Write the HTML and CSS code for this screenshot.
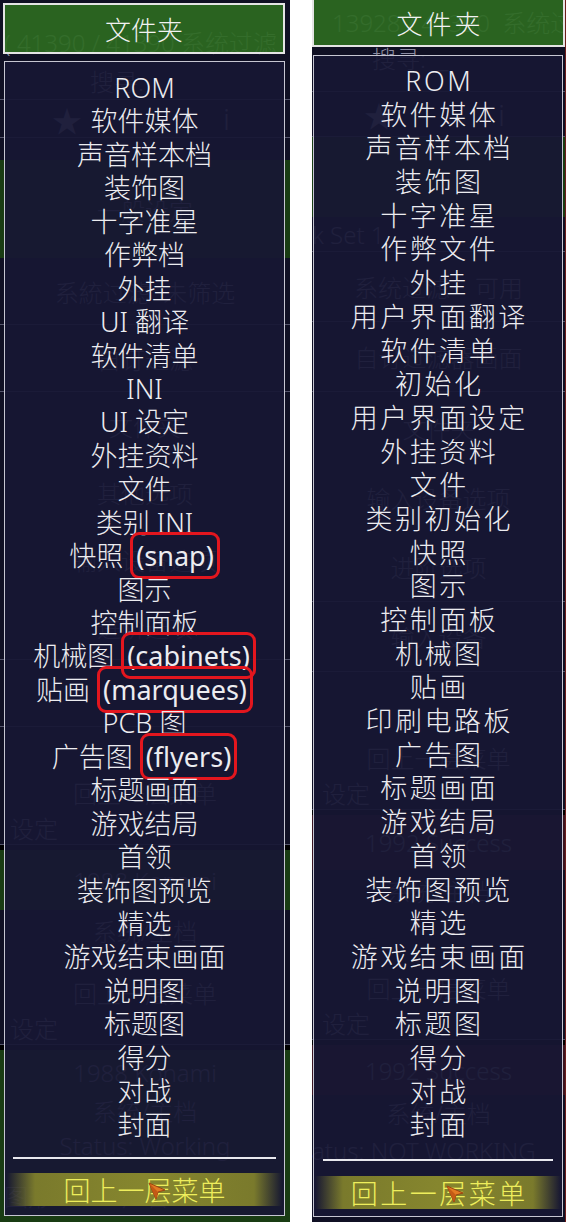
FILE: index.html
```html
<!DOCTYPE html>
<html>
<head>
  <meta charset="UTF-8">
  <title>文件夹</title>
  <link rel="stylesheet" href="styles.css">
</head>
<body>
  <div class="shots">

    <!-- 左图：原始翻译 -->
    <section class="panel panel-a">
      <div class="backdrop">
        <div class="bd h20"></div>
        <div class="bd h42 pad4">( 41390 / 41390 系统过滤</div>
        <div class="bd h38 line pad90">搜寻:&nbsp;&nbsp;_</div>
        <div class="bd h38 line icons"><span>★</span><span>i</span></div>
        <div class="bd h22"></div>
        <div class="bd h98 green center">一般设定</div>
        <div class="bd h67 line center">系統过滤&nbsp;&nbsp;未筛选</div>
        <div class="bd h67 line center">自订过滤</div>
        <div class="bd h67 center">文件夹</div>
        <div class="bd h67 center">其他选项</div>
        <div class="bd h67 center">输入设备选项</div>
        <div class="bd h67 line center">进阶选项</div>
        <div class="bd h67 line"></div>
        <div class="bd h48"></div>
        <div class="bd h35 center">回上一层菜单</div>
        <div class="bd h35 line pad10">设定</div>
        <div class="bd h5 black"></div>
        <div class="bd h60 green center">1988 Konami</div>
        <div class="bd h40 center">系统/主档</div>
        <div class="bd h25"></div>
        <div class="bd h35 center">回上一层菜单</div>
        <div class="bd h35 line pad10">设定</div>
        <div class="bd h5 black"></div>
        <div class="bd h45 green center">1988 Konami</div>
        <div class="bd h30 green center">系統/主档</div>
        <div class="bd h40 green center">Status: Working</div>
        <div class="bd h60 green pad4">图形&nbsp;&nbsp;&nbsp;OK&nbsp;&nbsp;&nbsp;声音&nbsp;&nbsp;&nbsp;OK</div>
      </div>

      <div class="popup">
        <div class="popup-title">文件夹</div>
        <div class="popup-menu">
          <ul class="items">
            <li>ROM</li>
            <li>软件媒体</li>
            <li>声音样本档</li>
            <li>装饰图</li>
            <li>十字准星</li>
            <li>作弊档</li>
            <li>外挂</li>
            <li>UI 翻译</li>
            <li>软件清单</li>
            <li>INI</li>
            <li>UI 设定</li>
            <li>外挂资料</li>
            <li>文件</li>
            <li>类别 INI</li>
            <li>快照 <span class="mark">(snap)</span></li>
            <li>图示</li>
            <li>控制面板</li>
            <li>机械图 <span class="mark">(cabinets)</span></li>
            <li>贴画 <span class="mark">(marquees)</span></li>
            <li>PCB 图</li>
            <li>广告图 <span class="mark">(flyers)</span></li>
            <li>标题画面</li>
            <li>游戏结局</li>
            <li>首领</li>
            <li>装饰图预览</li>
            <li>精选</li>
            <li>游戏结束画面</li>
            <li>说明图</li>
            <li>标题图</li>
            <li>得分</li>
            <li>对战</li>
            <li>封面</li>
          </ul>
          <div class="sep"></div>
          <div class="back">
            回上一层菜单
            <svg class="cursor" width="18" height="18" viewBox="0 0 18 18">
              <polygon points="1,1 17,8 10,10 8,17" fill="#e27a22" stroke="#9c4410" stroke-width="1"/>
              <polygon points="1,1 10,10 8,17" fill="#c45a16"/>
            </svg>
          </div>
        </div>
      </div>
    </section>

    <!-- 右图：修改后 -->
    <section class="panel panel-b">
      <div class="backdrop">
        <div class="bd h42 pad20">13928 / 41390&nbsp;&nbsp;系统过滤</div>
        <div class="bd h30 pad60">搜寻:&nbsp;&nbsp;_</div>
        <div class="bd h20 line"></div>
        <div class="bd h45 line icons"><span>★</span><span>i</span></div>
        <div class="bd h80 green"></div>
        <div class="bd h35 line">k Set 1</div>
        <div class="bd h70 line center">系统过滤&nbsp;&nbsp;&nbsp;&nbsp;可用</div>
        <div class="bd h70 line center">自订过滤器画面</div>
        <div class="bd h70 center">文件夹</div>
        <div class="bd h70 center">输入设备选项</div>
        <div class="bd h70 line center">进阶选项</div>
        <div class="bd h70 line center">输入设备</div>
        <div class="bd h68"></div>
        <div class="bd h35 center">回上一层菜单</div>
        <div class="bd h35 line pad10">设定</div>
        <div class="bd h5 black"></div>
        <div class="bd h55 red center">1992 Success</div>
        <div class="bd h40 center">系统/主档</div>
        <div class="bd h60"></div>
        <div class="bd h35 center">回上一层菜单</div>
        <div class="bd h35 line pad10">设定</div>
        <div class="bd h5 black"></div>
        <div class="bd h50 red center">1992 Success</div>
        <div class="bd h35 center">系统/主档</div>
        <div class="bd h40">atus: NOT WORKING</div>
        <div class="bd h60"></div>
      </div>

      <div class="popup">
        <div class="popup-title">文件夹</div>
        <div class="popup-menu">
          <ul class="items">
            <li>ROM</li>
            <li>软件媒体</li>
            <li>声音样本档</li>
            <li>装饰图</li>
            <li>十字准星</li>
            <li>作弊文件</li>
            <li>外挂</li>
            <li>用户界面翻译</li>
            <li>软件清单</li>
            <li>初始化</li>
            <li>用户界面设定</li>
            <li>外挂资料</li>
            <li>文件</li>
            <li>类别初始化</li>
            <li>快照</li>
            <li>图示</li>
            <li>控制面板</li>
            <li>机械图</li>
            <li>贴画</li>
            <li>印刷电路板</li>
            <li>广告图</li>
            <li>标题画面</li>
            <li>游戏结局</li>
            <li>首领</li>
            <li>装饰图预览</li>
            <li>精选</li>
            <li>游戏结束画面</li>
            <li>说明图</li>
            <li>标题图</li>
            <li>得分</li>
            <li>对战</li>
            <li>封面</li>
          </ul>
          <div class="sep"></div>
          <div class="back">
            回上一层菜单
            <svg class="cursor" width="18" height="18" viewBox="0 0 18 18">
              <polygon points="1,1 17,8 10,10 8,17" fill="#e27a22" stroke="#9c4410" stroke-width="1"/>
              <polygon points="1,1 10,10 8,17" fill="#c45a16"/>
            </svg>
          </div>
        </div>
      </div>
    </section>

  </div>
</body>
</html>
```

FILE: styles.css
```css
body {
  margin: 0;
  background: #fff;
  font-family: "Noto Sans", "Noto Sans CJK SC", sans-serif;
}

.shots {
  display: flex;
  gap: 22px;
  height: 1222px;
}

.panel {
  position: relative;
  height: 1222px;
  overflow: hidden;
  background: #101024;
  box-sizing: border-box;
}

.panel-a {
  width: 290px;
}

.panel-b {
  width: 254px;
  border-right: 1px solid #6e1c1c;
}

/* 菜单后面的游戏列表，透过半透明菜单隐约可见 */
.backdrop {
  display: flex;
  flex-direction: column;
  height: 100%;
}

.bd {
  flex: none;
  display: flex;
  align-items: center;
  box-sizing: border-box;
  font-size: 24px;
  font-weight: 300;
  color: #8c8ca2;
  white-space: nowrap;
  overflow: hidden;
}

.bd.line   { border-bottom: 1px solid #55556c; }
.bd.center { justify-content: center; }
.bd.green  { background: #193c13; }
.bd.red    { background: #3a1420; }
.bd.black  { background: #000; }
.bd.pad4   { padding-left: 4px; }
.bd.pad10  { padding-left: 10px; }
.bd.pad20  { padding-left: 20px; }
.bd.pad60  { padding-left: 60px; }
.bd.pad90  { padding-left: 90px; }

.bd.icons {
  justify-content: space-between;
  padding: 0 60px 0 52px;
  font-size: 30px;
}

.h5  { height: 5px; }
.h20 { height: 20px; }
.h22 { height: 22px; }
.h25 { height: 25px; }
.h30 { height: 30px; }
.h35 { height: 35px; }
.h38 { height: 38px; }
.h40 { height: 40px; }
.h42 { height: 42px; }
.h45 { height: 45px; }
.h48 { height: 48px; }
.h50 { height: 50px; }
.h55 { height: 55px; }
.h60 { height: 60px; }
.h67 { height: 67px; }
.h68 { height: 68px; }
.h70 { height: 70px; }
.h80 { height: 80px; }
.h98 { height: 98px; }

/* 弹出菜单 */
.popup {
  position: absolute;
  display: flex;
  flex-direction: column;
}

.panel-a .popup {
  top: 3px;
  left: 3px;
  width: 282px;
}

.panel-b .popup {
  top: -2px;
  left: 0;
  width: 253px;
}

.popup-title {
  height: 51px;
  box-sizing: border-box;
  border: 2px solid #e4e4e4;
  background: rgba(45, 106, 33, 0.92);
  color: #f2f2f2;
  font-family: "Noto Sans CJK SC", sans-serif;
  font-weight: 300;
  font-size: 26px;
  display: flex;
  align-items: center;
  justify-content: center;
}

.panel-b .popup-title {
  height: 49px;
  letter-spacing: 3px;
  padding-left: 3px;
}

.popup-menu {
  border: 1px solid #c6c6d2;
  background: rgba(23, 23, 52, 0.92);
  display: flex;
  flex-direction: column;
}

.panel-a .popup-menu {
  margin: 7px 0 0 1px;
  padding: 9px 0 9px;
}

.panel-b .popup-menu {
  margin: 8px 2px 0 1px;
  padding: 8px 0 7px;
}

.items {
  list-style: none;
  margin: 0;
  padding: 0;
  text-align: center;
  color: #ececf0;
  font-size: 27px;
  font-weight: 300;
}

.items li {
  height: 33.45px;
  line-height: 33.45px;
  white-space: nowrap;
}

.panel-b .items li {
  height: 33.7px;
  line-height: 33.7px;
  letter-spacing: 2.5px;
  padding-left: 2.5px;
}

/* 红框标注 */
.mark {
  border: 3px solid #e3161e;
  border-radius: 9px;
  padding: 2px 3px;
  font-weight: 400;
}

.sep {
  height: 2px;
  background: #e8e8ee;
}

.panel-a .sep {
  margin: 16px 8px 14px;
}

.panel-b .sep {
  margin: 17px 9px 15px;
}

.back {
  position: relative;
  height: 33px;
  display: flex;
  align-items: center;
  justify-content: center;
  color: #eeee5c;
  font-family: "Noto Sans CJK SC", sans-serif;
  font-weight: 300;
  font-size: 27px;
  background: linear-gradient(90deg, rgba(120, 120, 40, 0) 0, #7a7a2c 28px, #86862e 50%, #7a7a2c calc(100% - 28px), rgba(120, 120, 40, 0) 100%);
}

.panel-a .back {
  margin: 0 2px;
}

.panel-b .back {
  margin: 0 1px;
  letter-spacing: 2.5px;
  padding-left: 2.5px;
}

.cursor {
  position: absolute;
  top: 9px;
}

.panel-a .cursor {
  left: 141px;
}

.panel-b .cursor {
  left: 131px;
}
```
